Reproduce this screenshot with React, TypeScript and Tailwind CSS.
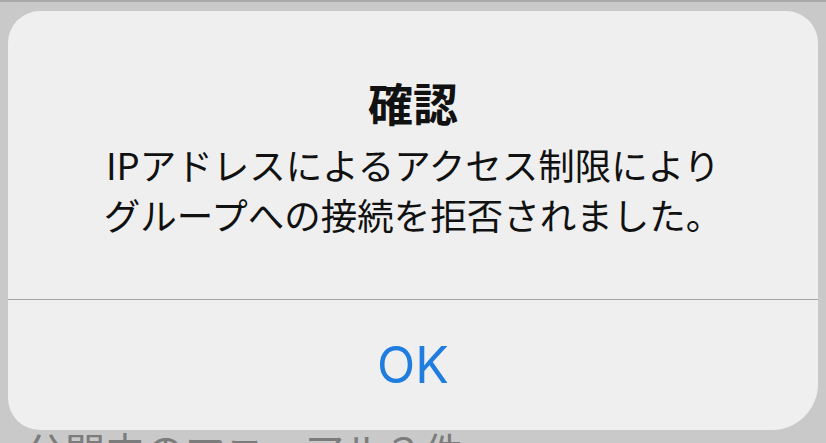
export default function App() {
  return (
    <div
      className="w-[826px] h-[443px] overflow-hidden bg-[#c9c9c9] border-t-2 border-[#a9a9a9]"
      style={{ fontFamily: '"Noto Sans CJK JP", "Noto Sans", sans-serif' }}
    >
      <div className="ml-[8px] mt-[9px] w-[810px] h-[419px] flex flex-col bg-[#efefef] rounded-[32px] rounded-br-[46px]">
        <div className="h-[288px] flex flex-col items-center pt-[64px]">
          <h1 className="text-[45px] leading-[56px] font-bold text-[#111]">確認</h1>
          <p className="mt-[9px] text-[36.5px] leading-[50px] text-[#111] text-center">
            IPアドレスによるアクセス制限により
            <br />
            グループへの接続を拒否されました。
          </p>
        </div>
        <div className="h-px bg-[#a4a4a4]" />
        <button
          className="flex-1 flex items-center justify-center text-[50px] text-[#1e7ddf]"
          style={{ fontFamily: 'Inter, "Liberation Sans", sans-serif' }}
        >
          OK
        </button>
      </div>
      <div className="pl-[25px] text-[40px] leading-none text-[#7c7c7c] whitespace-nowrap">
        公開中のマニュアル３件
      </div>
    </div>
  );
}
